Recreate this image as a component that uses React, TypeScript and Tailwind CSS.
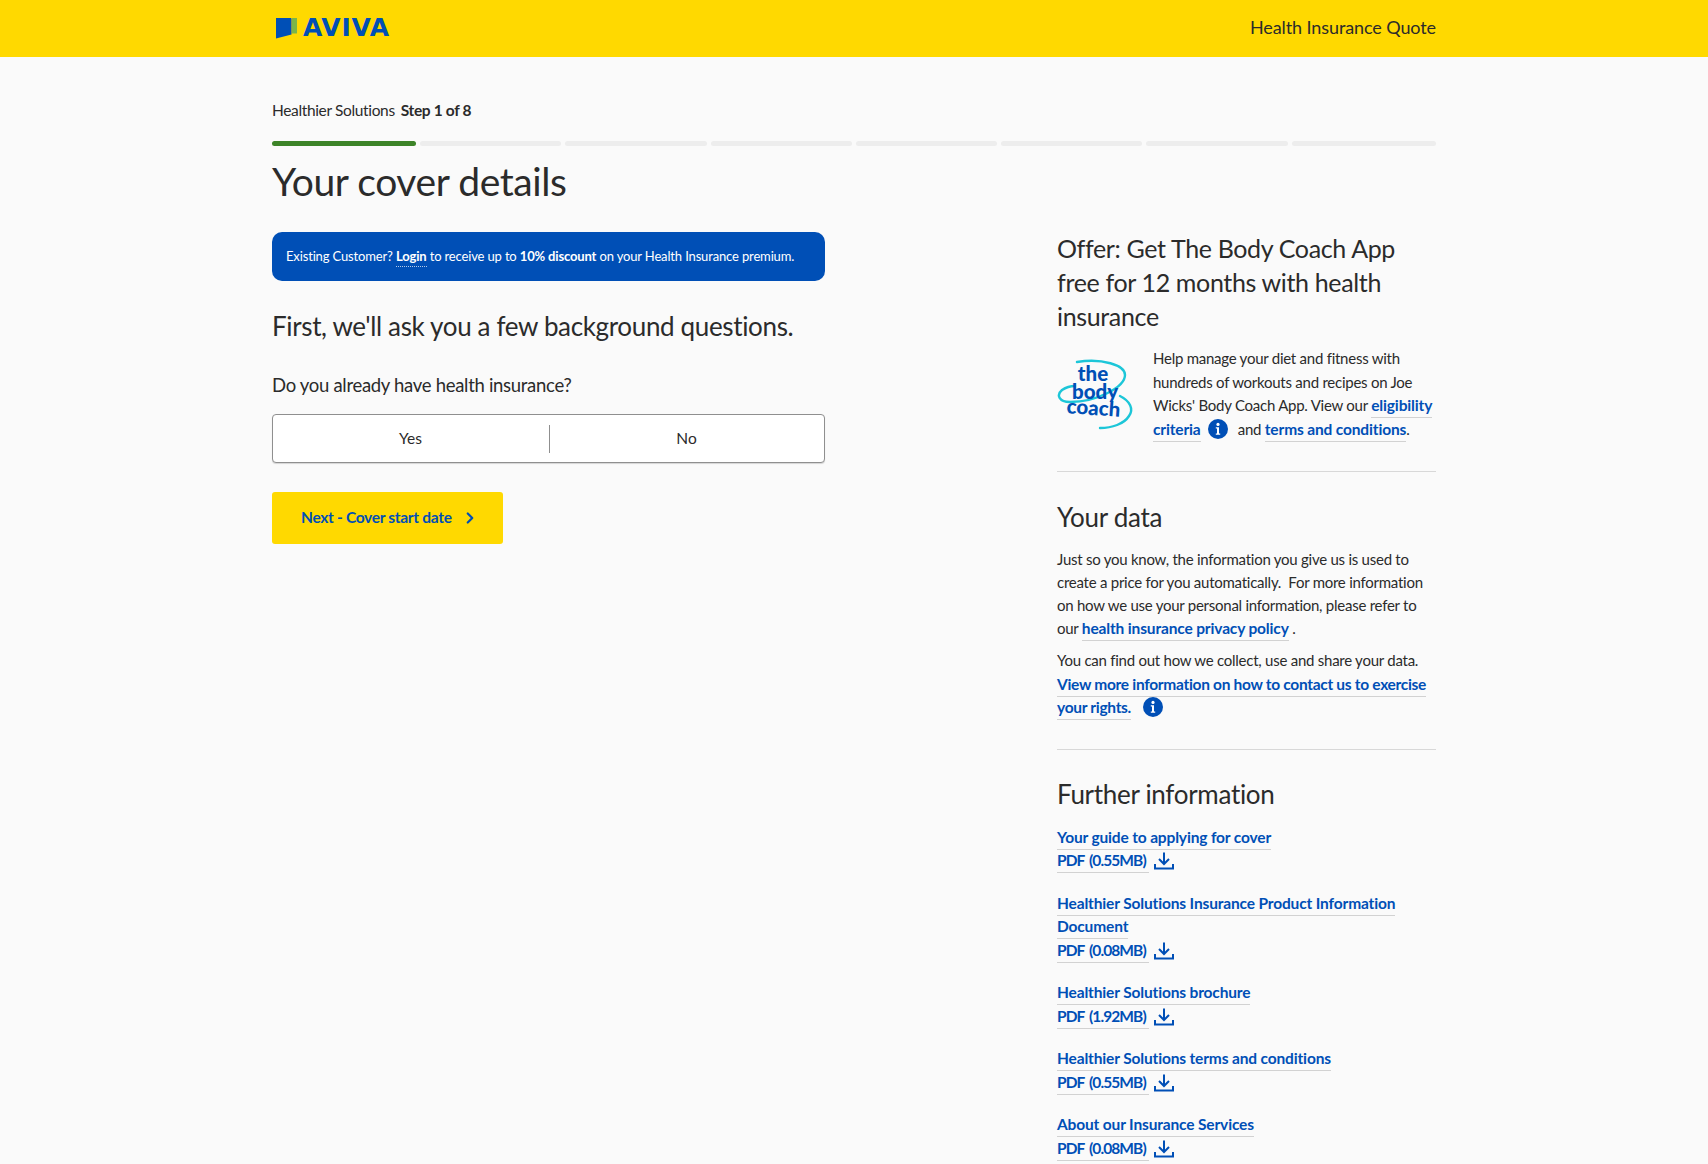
import React from 'react'
import { ChevronRight } from 'lucide-react'

const blue = 'text-[#004fb6]'

function A({ children, tight }: { children: React.ReactNode; tight?: boolean }) {
  return (
    <a className={`${blue} text-[15.5px] font-bold border-b border-[#d2d2d2] pb-[3px] ${tight ? 'tracking-[-0.3px]' : 'tracking-[-0.15px]'}`} href="#">
      {children}
    </a>
  )
}

function InfoDot() {
  return (
    <svg viewBox="0 0 20 20" className="inline-block w-[20px] h-[20px] align-[-4px]">
      <circle cx="10" cy="10" r="10" fill="#004fb6" />
      <circle cx="10" cy="5.4" r="1.6" fill="#fff" />
      <path d="M7.8 8.2h3.2v6.2h1.2v1.4H7.8v-1.4H9V9.6H7.8z" fill="#fff" />
    </svg>
  )
}

function Download() {
  return (
    <svg viewBox="0 0 20 18" className="inline-block w-[20px] h-[18px] align-[-4px]" fill="none" stroke="#004fb6" strokeWidth="2">
      <path d="M10 0.5v11M5 7l5 5 5-5" />
      <path d="M1 12v4.5h18V12" />
    </svg>
  )
}

function AvivaLogo() {
  return (
    <div className="flex items-center gap-[6px]">
      <svg viewBox="0 0 21 22" className="w-[21px] h-[22px]">
        <path d="M0 1h14.5c.6 0 1 .4 1 1v15.5L0 21.5z" fill="#004fb6" />
        <path d="M16 1h5v15.5h-5z" fill="#7ab648" />
      </svg>
      <span className="font-['DejaVu_Sans',sans-serif] font-bold text-[25px] leading-none tracking-[0.7px] text-[#004fb6]">
        AVIVA
      </span>
    </div>
  )
}

function BodyCoachLogo() {
  return (
    <svg viewBox="0 0 78 72" className="w-[78px] h-[72px] shrink-0">
      <path d="M20 3C45 -1 68 6 68 16C68 28 40 43 13 43C2 43 -1 36 5 31C8 29 13 27 18 27" fill="none" stroke="#1cc6d8" strokeWidth="2.4" strokeLinecap="round" />
      <path d="M63 37C73 42 77 50 72 57C67 65 55 69 43 69" fill="none" stroke="#1cc6d8" strokeWidth="2.4" strokeLinecap="round" />
      <g fill="#004fb6" fontFamily="Lato, sans-serif" fontWeight="900" fontSize="20.5" textAnchor="middle">
        <text x="36" y="22">the</text>
        <text x="38" y="40">body</text>
        <text x="36" y="56" transform="rotate(4 36 56)">coach</text>
      </g>
    </svg>
  )
}

function DocLink({ title, pdf }: { title: string; pdf: string }) {
  return (
    <div className="leading-[23.5px]">
      <div><A>{title}</A></div>
      <div>
        <a className={`${blue} text-[15.5px] font-bold border-b border-[#d2d2d2] pb-[3px] pr-[3px] tracking-[-0.9px] [word-spacing:2px]`} href="#">{pdf}</a>
        <span className="ml-[5px]"><Download /></span>
      </div>
    </div>
  )
}

export default function App() {
  return (
    <div className="h-[1164px] overflow-hidden bg-[#fafafa] text-[#2b2b2b] font-['Lato',sans-serif] text-[15px]">
      <header className="h-[57px] bg-[#ffd900]">
        <div className="w-[1164px] mx-auto h-full flex items-center justify-between pb-[2px]">
          <div className="pl-[4px]"><AvivaLogo /></div>
          <span className="text-[18px] tracking-[-0.1px]">Health Insurance Quote</span>
        </div>
      </header>

      <main className="w-[1164px] mx-auto">
        <div className="pt-[42px] flex gap-[6px] text-[15.5px] leading-[22px]">
          <span className="tracking-[-0.35px]">Healthier Solutions</span>
          <b className="tracking-[-0.35px]">Step 1 of 8</b>
        </div>

        <div className="mt-[20px] flex gap-[4px]">
          <div className="w-[144px] h-[5px] rounded-full bg-[#3d8428]" />
          {[1, 2, 3, 4, 5, 6].map(i => (
            <div key={i} className="w-[141.3px] h-[5px] rounded-full bg-[#ededed]" />
          ))}
          <div className="flex-1 h-[5px] rounded-full bg-[#ededed]" />
        </div>

        <h1 className="mt-[11px] text-[39px] leading-[48px] tracking-[-0.4px]">Your cover details</h1>

        <div className="mt-[27px] flex justify-between items-start">
          <section className="w-[553px]">
            <div className="h-[49px] rounded-[10px] bg-[#004fb6] text-white text-[13px] flex items-center px-[14px] tracking-[-0.15px]">
              <span className="whitespace-nowrap">
                Existing Customer? <b className="border-b border-dotted border-white/70 pb-[2px]">Login</b> to receive up to <b>10% discount</b> on your Health Insurance premium.
              </span>
            </div>

            <h2 className="mt-[28px] text-[26px] leading-[34px] tracking-[-0.35px]">First, we'll ask you a few background questions.</h2>

            <p className="mt-[29px] text-[18.5px] leading-[26px] tracking-[-0.3px]">Do you already have health insurance?</p>

            <div className="mt-[16px] h-[49px] rounded-[4px] border border-[#8f8f8f] bg-white flex items-center shadow-[0_1px_1px_rgba(0,0,0,0.15)] text-[15.5px]">
              <div className="flex-1 text-center">Yes</div>
              <div className="w-px h-[28px] bg-[#8f8f8f] relative left-[1px]" />
              <div className="flex-1 text-center">No</div>
            </div>

            <button className="mt-[29px] h-[52px] w-[231px] rounded-[3px] bg-[#ffd900] flex items-center pl-[29px] gap-[9px]">
              <span className={`${blue} font-bold text-[15.5px] tracking-[-0.3px]`}>Next - Cover start date</span>
              <ChevronRight className={`${blue} w-[18px] h-[18px]`} strokeWidth={3} />
            </button>
          </section>

          <aside className="w-[379px]">
            <h2 className="-mt-[1px] text-[25px] leading-[34px] tracking-[-0.35px]">
              Offer: Get The Body Coach App free for 12 months with health insurance
            </h2>
            <div className="mt-[14px] flex gap-[18px] pb-[30px] border-b border-[#d8d8d8]">
              <div className="pt-[12px]"><BodyCoachLogo /></div>
              <p className="leading-[23.5px] tracking-[-0.25px]">
                Help manage your diet and fitness with hundreds of workouts and recipes on Joe Wicks' Body Coach App. View our <A>eligibility criteria</A> <span className="ml-[4px] mr-[6px]"><InfoDot /></span> and <A>terms and conditions</A>.
              </p>
            </div>

            <h2 className="mt-[28px] text-[26px] leading-[34px] tracking-[-0.3px]">Your data</h2>
            <p className="mt-[14px] leading-[23px] tracking-[-0.25px]">
              Just so you know, the information you give us is used to create a price for you automatically.&nbsp; For more information on how we use your personal information, please refer to our <A>health insurance privacy policy</A> .
            </p>
            <p className="mt-[9px] leading-[23.5px] tracking-[-0.25px] pb-[29px] border-b border-[#d8d8d8]">
              You can find out how we collect, use and share your data. <A tight>View more information on how to contact us to exercise your rights.</A> <span className="ml-[8px]"><InfoDot /></span>
            </p>

            <h2 className="mt-[27px] text-[26px] leading-[34px] tracking-[-0.3px]">Further information</h2>
            <div className="mt-[15px] flex flex-col gap-[19px]">
              <DocLink title="Your guide to applying for cover" pdf="PDF (0.55MB)" />
              <DocLink title="Healthier Solutions Insurance Product Information Document" pdf="PDF (0.08MB)" />
              <DocLink title="Healthier Solutions brochure" pdf="PDF (1.92MB)" />
              <DocLink title="Healthier Solutions terms and conditions" pdf="PDF (0.55MB)" />
              <DocLink title="About our Insurance Services" pdf="PDF (0.08MB)" />
            </div>
          </aside>
        </div>
      </main>
    </div>
  )
}
